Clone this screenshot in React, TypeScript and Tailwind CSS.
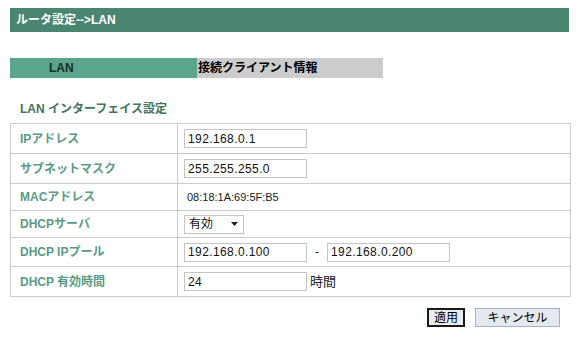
import React from 'react'

const font = { fontFamily: '"Liberation Sans", "Noto Sans CJK JP", sans-serif' }

interface RowProps {
  label: string
  h: string
  last?: boolean
  children: React.ReactNode
}

const Row: React.FC<RowProps> = ({ label, h, last, children }) => (
  <div className={`flex border-t border-[#cccccc] ${h} ${last ? 'border-b' : ''}`}>
    <div className="w-[167px] shrink-0 border-r border-[#cccccc] pl-[9px] flex items-center text-[12px] font-bold text-[#5b9a87]">
      {label}
    </div>
    <div className="flex-1 pl-[6px] flex items-center text-[12px] text-[#222]">{children}</div>
  </div>
)

const TextBox = ({ value }: { value: string }) => (
  <div className="w-[123px] h-[19px] border border-[#c4c4c4] bg-white pl-[3px] flex items-center text-[12px] tracking-[0.4px] text-[#111]">
    {value}
  </div>
)

export default function App() {
  return (
    <div className="w-[581px] h-[345px] bg-white pt-[8px] px-[10px]" style={font}>
      <div className="h-[24px] w-[559px] bg-[#4a8570] pl-[6px] flex items-center text-white font-bold text-[12px]">
        ルータ設定--&gt;LAN
      </div>

      <div className="mt-[26px] h-[20px] flex">
        <div className="w-[187px] bg-[#5aa58b] pl-[39px] flex items-center text-[12px] font-bold text-[#1c2b26]">
          LAN
        </div>
        <div className="w-[186px] bg-[#cccccc] pl-[1px] flex items-center text-[12px] font-bold text-black">
          接続クライアント情報
        </div>
      </div>

      <div className="h-[45px] pl-[10px] pt-[22px] text-[12px] font-bold text-[#3f7463]">LAN インターフェイス設定</div>

      <div className="border-x border-[#cccccc]">
        <Row label="IPアドレス" h="h-[30px]">
          <TextBox value="192.168.0.1" />
        </Row>
        <Row label="サブネットマスク" h="h-[30px]">
          <TextBox value="255.255.255.0" />
        </Row>
        <Row label="MACアドレス" h="h-[27px]">
          <span className="pl-[3px] text-[11px]">08:18:1A:69:5F:B5</span>
        </Row>
        <Row label="DHCPサーバ" h="h-[27px]">
          <div className="w-[60px] h-[19px] border border-[#c4c4c4] bg-white pl-[4px] pr-[5px] flex items-center justify-between text-[12px] text-[#111]">
            <span>有効</span>
            <svg width="7" height="4" viewBox="0 0 7 4">
              <path d="M0 0h7L3.5 4z" fill="#222" />
            </svg>
          </div>
        </Row>
        <Row label="DHCP IPプール" h="h-[29px]">
          <TextBox value="192.168.0.100" />
          <span className="w-[20px] text-center">-</span>
          <TextBox value="192.168.0.200" />
        </Row>
        <Row label="DHCP 有効時間" h="h-[31px]" last>
          <TextBox value="24" />
          <span className="pl-[3px] text-[13px]">時間</span>
        </Row>
      </div>

      <div className="mt-[11px] flex justify-end gap-[10px] pr-[11px]">
        <button className="w-[38px] h-[19px] border-2 border-[#1a1a1a] bg-[#e6ecf2] text-[12px] text-black flex items-center justify-center">
          適用
        </button>
        <button className="w-[85px] h-[19px] border border-[#a9b1ba] bg-[#e3e9ef] text-[12px] text-black flex items-center justify-center">
          キャンセル
        </button>
      </div>
    </div>
  )
}
